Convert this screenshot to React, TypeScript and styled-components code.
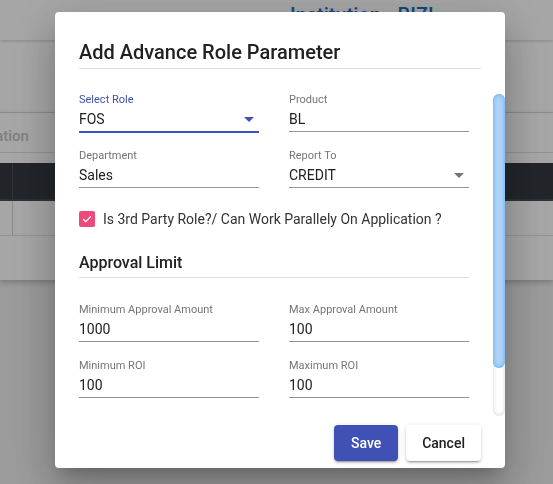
import React from 'react'
import styled, { createGlobalStyle } from 'styled-components'

const GlobalStyle = createGlobalStyle`
  html, body {
    margin: 0;
    padding: 0;
    background: #eeeeee;
    font-family: Roboto, "Liberation Sans", Arial, sans-serif;
    overflow: hidden;
  }
`

const PRIMARY = '#3f51b5'

export default function App() {
  return (
    <>
      <GlobalStyle />
      <Page>
        <Header>
          <Brand>Institution - BIZI</Brand>
        </Header>
        <Toolbar />
        <Card>
          <Tabs>
            <TabStrip>
              <Tab>Application</Tab>
              <Tab>Designation</Tab>
            </TabStrip>
          </Tabs>
          <Table>
            <HeadRow>
              <Cell />
              <Cell />
            </HeadRow>
            <BodyRow>
              <Cell />
              <Cell />
            </BodyRow>
          </Table>
        </Card>
      </Page>

      <Overlay>
        <Dialog>
          <Title>Add Advance Role Parameter</Title>
          <Body>
            <Content>
              <FieldGrid>
                <Field label="Select Role" value="FOS" select focused />
                <Field label="Product" value="BL" />
                <Field label="Department" value="Sales" />
                <Field label="Report To" value="CREDIT" select />
              </FieldGrid>

              <CheckRow>
                <CheckBox>
                  <svg width="12" height="12" viewBox="0 0 12 12">
                    <path d="M2.2 6.2 L4.8 8.6 L9.8 3.4" fill="none" stroke="#fff" strokeWidth="1.3" />
                  </svg>
                </CheckBox>
                <CheckLabel>Is 3rd Party Role?/ Can Work Parallely On Application ?</CheckLabel>
              </CheckRow>

              <SectionTitle>Approval Limit</SectionTitle>

              <FieldGrid $top={26}>
                <Field label="Minimum Approval Amount" value="1000" />
                <Field label="Max Approval Amount" value="100" />
                <Field label="Minimum ROI" value="100" />
                <Field label="Maximum ROI" value="100" />
              </FieldGrid>
            </Content>
            <ScrollTrack>
              <ScrollThumb />
            </ScrollTrack>
          </Body>
          <Actions>
            <Button $primary>Save</Button>
            <Button>Cancel</Button>
          </Actions>
        </Dialog>
      </Overlay>
    </>
  )
}

function Field({
  label,
  value,
  select,
  focused,
}: {
  label: string,
  value: string,
  select?: boolean,
  focused?: boolean,
}) {
  return (
    <FieldBox>
      <Label $focused={!!focused}>{label}</Label>
      <InputRow $focused={!!focused}>
        <Value>{value}</Value>
        {select && (
          <svg width="10" height="5" viewBox="0 0 10 5">
            <path d="M0 0 L10 0 L5 5 Z" fill={focused ? PRIMARY : '#757575'} />
          </svg>
        )}
      </InputRow>
    </FieldBox>
  )
}

/* background page */

const Page = styled.div`
  min-height: 484px;
`

const Header = styled.div`
  height: 40px;
  background: #fff;
  box-shadow: 0 1px 3px rgba(0, 0, 0, 0.2);
  position: relative;
`

const Brand = styled.div`
  padding: 3px 0 0 290px;
  font-size: 20px;
  line-height: 24px;
  font-weight: 500;
  color: #1e6fc2;
`

const Toolbar = styled.div`
  height: 72px;
  background: #fff;
  border-bottom: 1px solid #e0e0e0;
`

const Card = styled.div`
  background: #fff;
  height: 167px;
  box-shadow: 0 2px 6px rgba(0, 0, 0, 0.25);
`

const Tabs = styled.div`
  height: 39px;
  border-bottom: 1px solid #e0e0e0;
  overflow: hidden;
`

const TabStrip = styled.div`
  display: flex;
  margin-left: -47px;
  padding-top: 14px;
`

const Tab = styled.div`
  font-size: 15px;
  font-weight: 500;
  color: #c4c4c4;
  padding-right: 40px;
`

const Table = styled.div`
  margin-top: 10px;
`

const HeadRow = styled.div`
  display: grid;
  grid-template-columns: 13px 1fr;
  height: 36px;
  background: #343a40;
  border-bottom: 2px solid #454d55;
`

const BodyRow = styled.div`
  display: grid;
  grid-template-columns: 13px 1fr;
  height: 34px;
  border-bottom: 1px solid #dee2e6;
`

const Cell = styled.div`
  border-right: 1px solid rgba(120, 130, 140, 0.35);
  &:last-child {
    border-right: none;
  }
`

/* dialog */

const Overlay = styled.div`
  position: fixed;
  inset: 0;
  z-index: 10;
  background: rgba(0, 0, 0, 0.35);
  padding: 12px 0 0 55px;
`

const Dialog = styled.div`
  width: 450px;
  height: 456px;
  background: #fff;
  border-radius: 4px;
  display: flex;
  flex-direction: column;
  box-shadow: 0 11px 15px -7px rgba(0, 0, 0, 0.2), 0 24px 38px 3px rgba(0, 0, 0, 0.14),
    0 9px 46px 8px rgba(0, 0, 0, 0.12);
`

const Title = styled.h2`
  margin: 28px 24px 0;
  padding-bottom: 4px;
  border-bottom: 1px solid #dddddd;
  font-size: 20px;
  line-height: 24px;
  font-weight: 500;
  color: #212121;
`

const Body = styled.div`
  margin-top: 25px;
  height: 322px;
  overflow: hidden;
  display: flex;
  padding-left: 24px;
`

const Content = styled.div`
  width: 390px;
  margin-right: 24px;
`

const ScrollTrack = styled.div`
  width: 12px;
  height: 322px;
  border-radius: 6px;
  background: #fff;
  box-shadow: inset 0 0 4px rgba(0, 0, 0, 0.18);
`

const ScrollThumb = styled.div`
  height: 274px;
  border-radius: 6px;
  background: #add3f7;
  box-shadow: inset 0 0 4px #5aa9f0;
`

const FieldGrid = styled.div<{ $top?: number }>`
  display: grid;
  grid-template-columns: 180px 180px;
  column-gap: 30px;
  row-gap: 18px;
  margin-top: ${({ $top }) => $top || 0}px;
`

const FieldBox = styled.div`
  display: flex;
  flex-direction: column;
`

const Label = styled.div<{ $focused: boolean }>`
  font-size: 11px;
  line-height: 12px;
  color: ${({ $focused }) => ($focused ? PRIMARY : '#757575')};
`

const InputRow = styled.div<{ $focused: boolean }>`
  display: flex;
  align-items: center;
  margin-top: 3px;
  padding: 0 5px 2px 0;
  border-bottom: 1px solid #949494;
  ${({ $focused }) => $focused && `
    border-bottom-color: ${PRIMARY};
    box-shadow: 0 1px 0 ${PRIMARY};
  `}
`

const Value = styled.div`
  flex: 1;
  font-size: 14px;
  line-height: 20px;
  color: #212121;
`

const CheckRow = styled.div`
  display: flex;
  align-items: center;
  gap: 8px;
  height: 24px;
  margin-top: 19px;
`

const CheckBox = styled.div`
  width: 16px;
  height: 16px;
  border-radius: 2px;
  background: #ec4b7b;
  display: flex;
  align-items: center;
  justify-content: center;
`

const CheckLabel = styled.div`
  font-size: 14px;
  color: #333;
`

const SectionTitle = styled.div`
  margin-top: 22px;
  padding-bottom: 4px;
  border-bottom: 1px solid #dddddd;
  font-size: 16px;
  line-height: 20px;
  font-weight: 500;
  color: #212121;
`

const Actions = styled.div`
  display: flex;
  justify-content: flex-end;
  gap: 8px;
  padding: 9px 24px 7px;
`

const Button = styled.button<{ $primary?: boolean }>`
  height: 36px;
  min-width: 64px;
  padding: 0 16px;
  border: none;
  border-radius: 4px;
  font-family: Roboto, "Liberation Sans", Arial, sans-serif;
  font-size: 14px;
  font-weight: 500;
  background: ${({ $primary }) => ($primary ? PRIMARY : '#fff')};
  color: ${({ $primary }) => ($primary ? '#fff' : '#212121')};
  box-shadow: 0 3px 1px -2px rgba(0, 0, 0, 0.2), 0 2px 2px 0 rgba(0, 0, 0, 0.14),
    0 1px 5px 0 rgba(0, 0, 0, 0.12);
`
